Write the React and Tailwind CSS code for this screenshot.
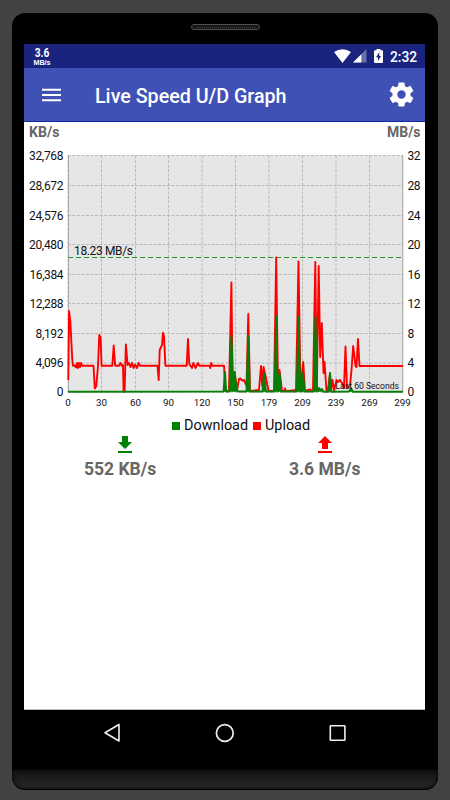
import React from 'react';

const verticalTicks = [
  [68, '0'], [101.5, '30'], [135.5, '60'], [168.5, '90'], [202, '120'], [235.5, '150'],
  [269, '179'], [302.5, '209'], [336, '239'], [369.5, '269'], [402.5, '299'],
];

const horizontalTicks = [
  [155.5, '32,768', '32', 34.5], [185.5, '28,672', '28', 34.5], [215.5, '24,576', '24', 34.5],
  [244.5, '20,480', '20', 34.5], [274.5, '16,384', '16', 34], [303.5, '12,288', '12', 34],
  [333.5, '8,192', '8', 28], [363, '4,096', '4', 28], [392, '0', '0', 7],
];

const upload =
  '68.3,380 69,311 70.3,321 72.3,360 73,365.7 75,365.5 76,367.5 77,363 78,368 79,363 80,367 81,363 82,365.7 93.5,365.7 94.8,388.5 96.3,386 98,366 99.3,335 100.6,338 101.6,365.7 112.3,365.7 113.7,345.5 115.2,365.7 119,365.7 120.5,363 122,366 123,365 123.6,392 124.6,391 125.9,344.5 127.6,365 129,363 130.5,367 132,363 133.5,368 135,364.5 137,368 138.5,363 140,365.7 157.5,365.7 158.7,380 159.7,350 162,345 163,332.7 164,336 165.4,365.7 186.7,365.7 188,339 189.3,364 192,368 193.4,363 195.5,368 198,363 199.3,365.7 209.5,365.7 210.3,368 211.2,363 212.5,365.7 224,365.7 225.3,391 229,391 231.4,282.5 232.7,388 234.5,372 237,390 239,379 240.5,378.5 242,380.5 244,380 246.5,386 248.3,314 250,391 259,390 261,366 262.2,386 263.5,367 266,378 268.5,391 274,391 276.2,257.5 278,388 279.5,370 282,391 284,391 285,388.5 286,391 289,391 296,390 298.5,261.5 300.5,390 303.2,362 305,391 310,389.5 313,391 315.3,262 316.8,390 318.7,266 320.2,357 321.8,323 323.5,373 324.5,362 326.5,391 328,390 330,373 331,389 332.5,380 334,391 336.5,380 338,382 340,380 342,383 344,388 345.5,346.5 347,388 350,386 351.5,370 353.2,346 355.5,366 356.5,367 358,339 359.5,366 403,366';

const download =
  '68,391.8 223.5,391.5 225,372 226.2,391.5 229.5,391.5 231.4,336 233.2,389 234.7,372 236.5,388 238,391.5 246.5,391.5 248.3,336 249.8,391.5 262.5,391.5 264,373 266,391.5 274.5,391.5 276.2,316 277.7,391.5 279.6,373 281,391.5 296.7,391.5 298.5,317 300.3,391.5 301.5,391.5 303,373 304.5,391.5 313.8,391.5 315.4,317 317,391.5 319,388 320.5,390 322,389 323.5,391.7 328.5,391.7 330,373 331.2,391.7 349,391.5 351,388 353,391.7 403,391.7';

function SpeedGraph() {
  return (
    <svg className="block h-[290px] w-[401px] shrink-0" viewBox="24 122 401 290" fontFamily="Roboto, sans-serif">
      <g fill="#666666" fontSize="14" fontWeight="700">
        <text x="29" y="137.3" textLength="30.5" lengthAdjust="spacingAndGlyphs">KB/s</text>
        <text x="387" y="137.3" textLength="33.5" lengthAdjust="spacingAndGlyphs">MB/s</text>
      </g>
      <rect x="68" y="155.5" width="335" height="236.5" fill="#e6e6e6" />
      <g stroke="#bababa" strokeWidth="1" strokeDasharray="3 1.5">
        {verticalTicks.map(([x]) => <line key={x} x1={x} y1="155.5" x2={x} y2="392" />)}
        {horizontalTicks.map(([y]) => <line key={y} x1="68" y1={y} x2="403" y2={y} />)}
      </g>
      <path d="M68.5 155.5V392M402.8 155.5V392" stroke="#aaa" strokeWidth="1" />
      <line x1="68" y1="257.5" x2="403" y2="257.5" stroke="#2c912c" strokeWidth="1" strokeDasharray="5 3" />
      <polyline points={upload} fill="none" stroke="#ff0000" strokeWidth="1.9" strokeLinejoin="round" />
      <polyline points={download} fill="#087d08" stroke="#087d08" strokeWidth="1.9" strokeLinejoin="round" />
      <g fill="#111" fontSize="12">
        {horizontalTicks.map(([y, left, right, length]) => (
          <React.Fragment key={y}>
            <text x="63.5" y={y + 4.2} textAnchor="end" textLength={length}>{left}</text>
            <text x="407.6" y={y + 4.2} textLength={right.length * 6.5}>{right}</text>
          </React.Fragment>
        ))}
        <text x="74" y="255" textLength="59">18.23 MB/s</text>
      </g>
      <g fill="#111" fontSize="9.8" textAnchor="middle">
        {verticalTicks.map(([x, label]) => <text key={x} x={x} y="405.6">{label}</text>)}
      </g>
      <text x="335.5" y="388.6" fill="#111" fontSize="8.8" textLength="63.5" lengthAdjust="spacingAndGlyphs">Last 60 Seconds</text>
    </svg>
  );
}

function StatusBar() {
  return (
    <div className="flex h-6 shrink-0 justify-between bg-[#1a237e] text-white">
      <svg className="ml-[8px] h-[24px] w-[20px] shrink-0" viewBox="0 0 20 24" fill="#fff">
        <text x="2.8" y="13.4" fontFamily="Roboto, sans-serif" fontSize="13" fontWeight="700" textLength="14.6" lengthAdjust="spacingAndGlyphs">3.6</text>
        <text x="1.4" y="21" fontSize="7" fontWeight="700" fontFamily="Liberation Sans, sans-serif" textLength="17.2" lengthAdjust="spacingAndGlyphs">MB/s</text>
      </svg>
      <div className="mr-[8px] flex items-center">
        <svg className="mr-[2px] h-[14px] w-[17px]" viewBox="0 0 17 14" fill="#fff"><path d="M0 3Q8.5-2.5 17 3L8.5 14Z" /></svg>
        <svg className="mr-[7px] h-[14px] w-[14px]" viewBox="0 0 14 14" fill="#fff"><path opacity=".35" d="M13.5 0V13.5H0Z" /><path d="M8.3 5.2V13.5H0Z" /></svg>
        <svg className="mr-[7px] h-[14px] w-[9px]" viewBox="0 0 9 14"><path fill="#fff" d="M2.5 0h4v1.3H8Q9 1.3 9 2.3V13q0 1-1 1H1q-1 0-1-1V2.3q0-1 1-1h1.5Z" /><path fill="#1a237e" d="M5.3 3 2 8.2h2V12l3-5H5.2Z" /></svg>
        <span className="w-[27px] whitespace-nowrap pt-px text-[13.8px] font-medium leading-6">2:32</span>
      </div>
    </div>
  );
}

function AppBar() {
  return (
    <div className="flex h-[54px] shrink-0 items-center border-b border-[#1028a0] bg-[#3f51b5] text-white">
      <svg className="ml-[18px] h-[14px] w-[19px]" viewBox="0 0 19 14" fill="#fff"><path d="M0 .7h19v2H0zM0 6h19v2H0zM0 11.3h19v2H0z" /></svg>
      <svg className="ml-[34px] h-7 w-[194px]" viewBox="0 0 194 28" fill="#fff"><text x="0" y="22" fontFamily="Roboto, sans-serif" fontSize="20" fontWeight="500" textLength="191.5" lengthAdjust="spacingAndGlyphs">Live Speed U/D Graph</text></svg>
      <svg className="ml-auto mr-[9px] h-[29px] w-[29px]" viewBox="0 0 24 24" fill="#fff"><path d="M19.43 12.98c.04-.32.07-.64.07-.98s-.03-.66-.07-.98l2.11-1.65c.19-.15.24-.42.12-.64l-2-3.46c-.12-.22-.39-.3-.61-.22l-2.49 1c-.52-.4-1.08-.73-1.69-.98l-.38-2.65C14.46 2.18 14.25 2 14 2h-4c-.25 0-.46.18-.49.42l-.38 2.65c-.61.25-1.17.59-1.69.98l-2.49-1c-.23-.09-.49 0-.61.22l-2 3.46c-.13.22-.07.49.12.64l2.11 1.65c-.04.32-.07.65-.07.98s.03.66.07.98l-2.11 1.65c-.19.15-.24.42-.12.64l2 3.46c.12.22.39.3.61.22l2.49-1c.52.4 1.08.73 1.69.98l.38 2.65c.03.24.24.42.49.42h4c.25 0 .46-.18.49-.42l.38-2.65c.61-.25 1.17-.59 1.69-.98l2.49 1c.23.09.49 0 .61-.22l2-3.46c.12-.22.07-.49-.12-.64l-2.11-1.65zM12 15.5c-1.93 0-3.5-1.57-3.5-3.5s1.57-3.5 3.5-3.5 3.5 1.57 3.5 3.5-1.57 3.5-3.5 3.5z" /></svg>
    </div>
  );
}

function Totals() {
  return (
    <div className="flex h-[46px] text-[17.5px] font-bold leading-5 text-[#666]">
      <div className="ml-[60px] flex w-[73px] flex-col items-start">
        <svg className="ml-[33.5px] h-[17px] w-[14px]" viewBox="0 0 14 17" fill="#008000"><path d="M4 0h6v6h4l-7 7-7-7h4zM0 15h14v2H0z" /></svg>
        <span className="mt-[6px] whitespace-nowrap">552 KB/s</span>
      </div>
      <div className="ml-[132px] flex w-[73px] flex-col items-start">
        <svg className="ml-[29px] h-[17px] w-[14px]" viewBox="0 0 14 17" fill="#ff0000"><path d="M7 0l7 7h-4v6H4V7H0zM0 15h14v2H0z" /></svg>
        <span className="mt-[6px] whitespace-nowrap">3.6 MB/s</span>
      </div>
    </div>
  );
}

export default function App() {
  return (
    <div className="h-[800px] w-[450px] overflow-hidden bg-[#424242] pl-[12px] pt-[13px] font-[Roboto,sans-serif]">
      <div className="flex h-[777px] w-[426px] flex-col overflow-hidden rounded-[13px] bg-black">
        <div className="flex h-[31px] shrink-0 justify-center pt-[11px]">
          <div className="flex h-[6px] w-[69px] items-center rounded-full border border-[#505050] bg-[#171717] px-1">
            <div className="w-full border-t border-dotted border-[#484848]" />
          </div>
        </div>
        <div className="ml-[12px] flex h-[666px] w-[401px] shrink-0 flex-col overflow-hidden border-b border-[#bbb] bg-white">
          <StatusBar />
          <AppBar />
          <SpeedGraph />
          <div className="flex h-[24px] shrink-0 items-center pl-[148px] pt-[3px] text-[14.4px] leading-5 text-[#111]">
            <span className="mr-[4px] h-2 w-2 bg-[#008000]" />
            <span className="w-[69px] whitespace-nowrap">Download</span>
            <span className="mr-[4px] h-2 w-2 bg-[#ff0000]" />
            <span>Upload</span>
          </div>
          <Totals />
        </div>
        <div className="flex h-[59px] shrink-0 items-start bg-black pl-[91px] pt-[12px]">
          <svg className="h-[22px] w-[20px]" viewBox="0 0 20 22" fill="none" stroke="#eee" strokeWidth="1.6"><path d="M16 2.5v16.5L2 10.8Z" strokeLinejoin="round" /></svg>
          <svg className="ml-[91px] h-[22px] w-[22px]" viewBox="0 0 22 22" fill="none" stroke="#eee" strokeWidth="1.7"><circle cx="10.8" cy="11" r="8.4" /></svg>
          <svg className="ml-[92px] h-[22px] w-[20px]" viewBox="0 0 20 22" fill="none" stroke="#eee" strokeWidth="1.6"><rect x="2.3" y="3.7" width="14.6" height="14.6" rx=".5" /></svg>
        </div>
        <div className="h-[21px] shrink-0 rounded-b-[13px] border-b border-black bg-linear-to-b from-[#111] to-[#292929] shadow-[inset_0_0_4px_#000]" />
      </div>
    </div>
  );
}
